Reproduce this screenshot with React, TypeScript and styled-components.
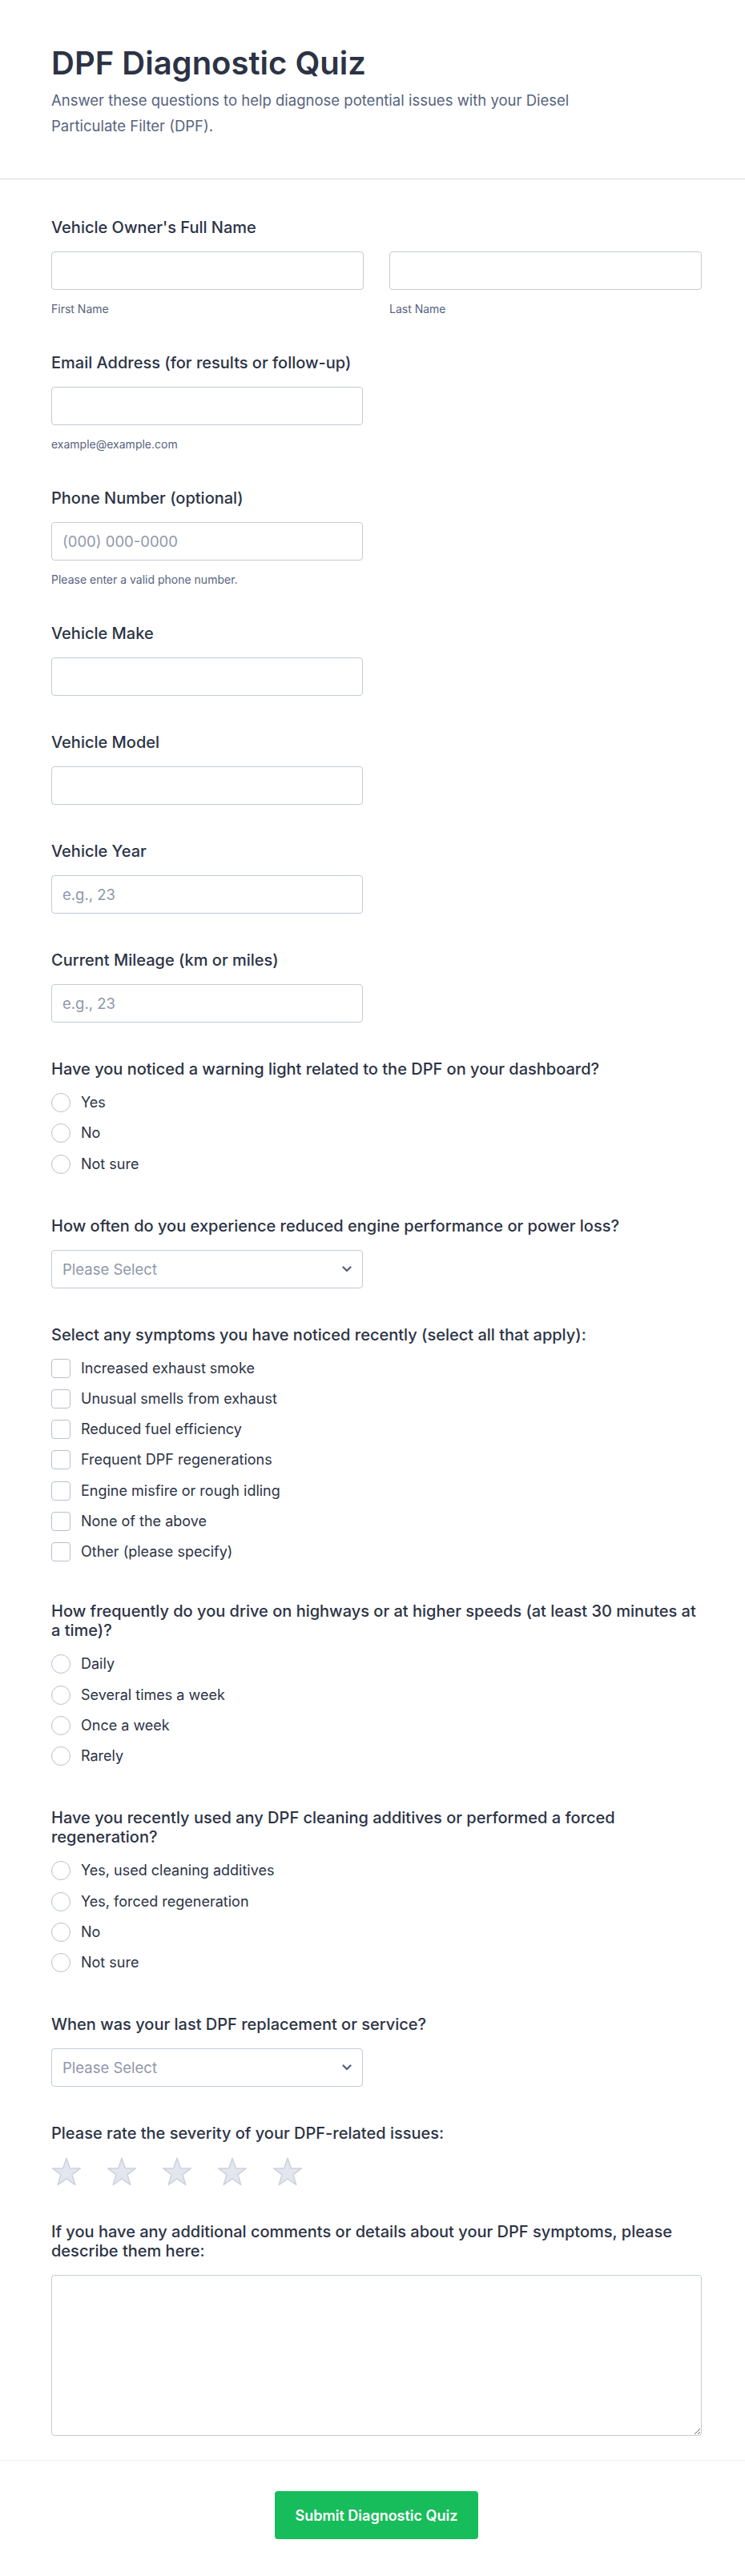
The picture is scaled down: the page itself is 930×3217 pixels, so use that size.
import React from "react";
import styled, { createGlobalStyle } from "styled-components";

const GlobalStyle = createGlobalStyle`
  * {
    box-sizing: border-box;
  }

  body {
    margin: 0;
    background: #ffffff;
    font-family: Inter, "Noto Sans", "Liberation Sans", sans-serif;
    color: #2c3345;
  }
`;

const Page = styled.div`
  width: 930px;
  min-height: 3217px;
  background: #ffffff;
`;

const Header = styled.header`
  padding: 55px 64px 50px;
  border-bottom: 1px solid #d8dae3;
`;

const Title = styled.h1`
  margin: 0;
  font-size: 40px;
  line-height: 48px;
  font-weight: 600;
  color: #2c3345;
`;

const Subtitle = styled.p`
  margin: 6px 0 0;
  max-width: 740px;
  font-size: 18.5px;
  line-height: 32px;
  color: #57647e;
`;

const Form = styled.form`
  display: flex;
  flex-direction: column;
  gap: 46px;
  padding: 48px 54px 30px 64px;
`;

const Field = styled.div`
  display: flex;
  flex-direction: column;
`;

const Label = styled.label`
  display: block;
  margin-bottom: 18px;
  font-size: 20px;
  line-height: 24px;
  font-weight: 500;
  color: #2c3345;
`;

const NameRow = styled.div`
  display: grid;
  grid-template-columns: 1fr 1fr;
  gap: 32px;
`;

const SubField = styled.div`
  display: flex;
  flex-direction: column;
`;

const TextInput = styled.input<{ $wide?: boolean }>`
  width: ${(p) => (p.$wide ? "100%" : "389px")};
  height: 48px;
  padding: 0 13px;
  border: 1px solid #c3cad8;
  border-radius: 4px;
  background: #ffffff;
  font-family: inherit;
  font-size: 18.5px;
  color: #2c3345;
  outline: none;

  &::placeholder {
    color: #8f97ab;
  }
`;

const SubLabel = styled.span`
  margin-top: 15px;
  font-size: 14px;
  line-height: 18px;
  color: #57647e;
`;

const SelectBox = styled.div`
  display: flex;
  align-items: center;
  justify-content: space-between;
  width: 389px;
  height: 48px;
  padding: 0 13px;
  border: 1px solid #c3cad8;
  border-radius: 4px;
  background: #ffffff;
  font-size: 18.5px;
  color: #8f97ab;
`;

const OptionList = styled.div<{ $extra: number }>`
  display: flex;
  flex-direction: column;
  gap: 14.3px;
  padding-bottom: ${(p) => p.$extra}px;
`;

const Option = styled.label`
  display: flex;
  align-items: center;
  gap: 13px;
  height: 24px;
  font-size: 18px;
  line-height: 24px;
  color: #2c3345;
`;

const Control = styled.span<{ $round?: boolean }>`
  flex: none;
  width: 24px;
  height: 24px;
  border: 1px solid #b8bfcf;
  border-radius: ${(p) => (p.$round ? "50%" : "4px")};
  background: #ffffff;
`;

const Stars = styled.div`
  display: flex;
  gap: 31px;
  height: 35px;
`;

const TextArea = styled.textarea`
  width: 100%;
  height: 201px;
  padding: 12px 13px;
  border: 1px solid #c3cad8;
  border-radius: 4px;
  font-family: inherit;
  font-size: 18px;
  color: #2c3345;
  resize: vertical;
  outline: none;
`;

const Footer = styled.footer`
  display: flex;
  justify-content: center;
  padding: 38px 54px 50px 64px;
  border-top: 1px solid #eceef3;
`;

const SubmitButton = styled.button`
  height: 60px;
  padding: 0 26px;
  border: none;
  border-radius: 4px;
  background: #18bd5b;
  font-family: inherit;
  font-size: 18px;
  font-weight: 600;
  color: #ffffff;
  cursor: pointer;
`;

const Chevron = () => (
  <svg width="12" height="8" viewBox="0 0 12 8" fill="none">
    <path
      d="M1.5 1.5 6 6l4.5-4.5"
      stroke="#57647e"
      strokeWidth="2.4"
      strokeLinecap="round"
      strokeLinejoin="round"
    />
  </svg>
);

const starPoints = (() => {
  const cx = 19;
  const cy = 19.6;
  const outer = 18.3;
  const inner = outer * 0.4;
  const pts: string[] = [];
  for (let k = 0; k < 10; k++) {
    const a = ((-90 + 36 * k) * Math.PI) / 180;
    const r = k % 2 === 0 ? outer : inner;
    pts.push(`${(cx + r * Math.cos(a)).toFixed(2)},${(cy + r * Math.sin(a)).toFixed(2)}`);
  }
  return pts.join(" ");
})();

const Star = () => (
  <svg width="38" height="36" viewBox="0 0 38 36">
    <polygon
      points={starPoints}
      fill="#e3e6ef"
      stroke="#ccd1dd"
      strokeWidth="1.5"
      strokeLinejoin="round"
    />
  </svg>
);

interface ChoiceProps {
  label: string;
  options: string[];
  round?: boolean;
}

const ChoiceField: React.FC<ChoiceProps> = ({ label, options, round }) => (
  <Field>
    <Label>{label}</Label>
    <OptionList $extra={round ? 7 : 4}>
      {options.map((o) => (
        <Option key={o}>
          <Control $round={round} />
          {o}
        </Option>
      ))}
    </OptionList>
  </Field>
);

const SelectField: React.FC<{ label: string }> = ({ label }) => (
  <Field>
    <Label>{label}</Label>
    <SelectBox>
      Please Select
      <Chevron />
    </SelectBox>
  </Field>
);

const InputField: React.FC<{ label: string; placeholder?: string; hint?: string }> = ({
  label,
  placeholder,
  hint,
}) => (
  <Field>
    <Label>{label}</Label>
    <TextInput placeholder={placeholder} />
    {hint && <SubLabel>{hint}</SubLabel>}
  </Field>
);

const App: React.FC = () => {
  return (
    <Page>
      <GlobalStyle />
      <Header>
        <Title>DPF Diagnostic Quiz</Title>
        <Subtitle>
          Answer these questions to help diagnose potential issues with your Diesel Particulate
          Filter (DPF).
        </Subtitle>
      </Header>

      <Form onSubmit={(e) => e.preventDefault()}>
        <Field>
          <Label>Vehicle Owner's Full Name</Label>
          <NameRow>
            <SubField>
              <TextInput $wide />
              <SubLabel>First Name</SubLabel>
            </SubField>
            <SubField>
              <TextInput $wide />
              <SubLabel>Last Name</SubLabel>
            </SubField>
          </NameRow>
        </Field>

        <InputField label="Email Address (for results or follow-up)" hint="example@example.com" />
        <InputField
          label="Phone Number (optional)"
          placeholder="(000) 000-0000"
          hint="Please enter a valid phone number."
        />
        <InputField label="Vehicle Make" />
        <InputField label="Vehicle Model" />
        <InputField label="Vehicle Year" placeholder="e.g., 23" />
        <InputField label="Current Mileage (km or miles)" placeholder="e.g., 23" />

        <ChoiceField
          round
          label="Have you noticed a warning light related to the DPF on your dashboard?"
          options={["Yes", "No", "Not sure"]}
        />

        <SelectField label="How often do you experience reduced engine performance or power loss?" />

        <ChoiceField
          label="Select any symptoms you have noticed recently (select all that apply):"
          options={[
            "Increased exhaust smoke",
            "Unusual smells from exhaust",
            "Reduced fuel efficiency",
            "Frequent DPF regenerations",
            "Engine misfire or rough idling",
            "None of the above",
            "Other (please specify)",
          ]}
        />

        <ChoiceField
          round
          label="How frequently do you drive on highways or at higher speeds (at least 30 minutes at a time)?"
          options={["Daily", "Several times a week", "Once a week", "Rarely"]}
        />

        <ChoiceField
          round
          label="Have you recently used any DPF cleaning additives or performed a forced regeneration?"
          options={["Yes, used cleaning additives", "Yes, forced regeneration", "No", "Not sure"]}
        />

        <SelectField label="When was your last DPF replacement or service?" />

        <Field>
          <Label>Please rate the severity of your DPF-related issues:</Label>
          <Stars>
            {[1, 2, 3, 4, 5].map((n) => (
              <Star key={n} />
            ))}
          </Stars>
        </Field>

        <Field>
          <Label>
            If you have any additional comments or details about your DPF symptoms, please
            describe them here:
          </Label>
          <TextArea />
        </Field>
      </Form>

      <Footer>
        <SubmitButton type="submit">Submit Diagnostic Quiz</SubmitButton>
      </Footer>
    </Page>
  );
};

export default App;
